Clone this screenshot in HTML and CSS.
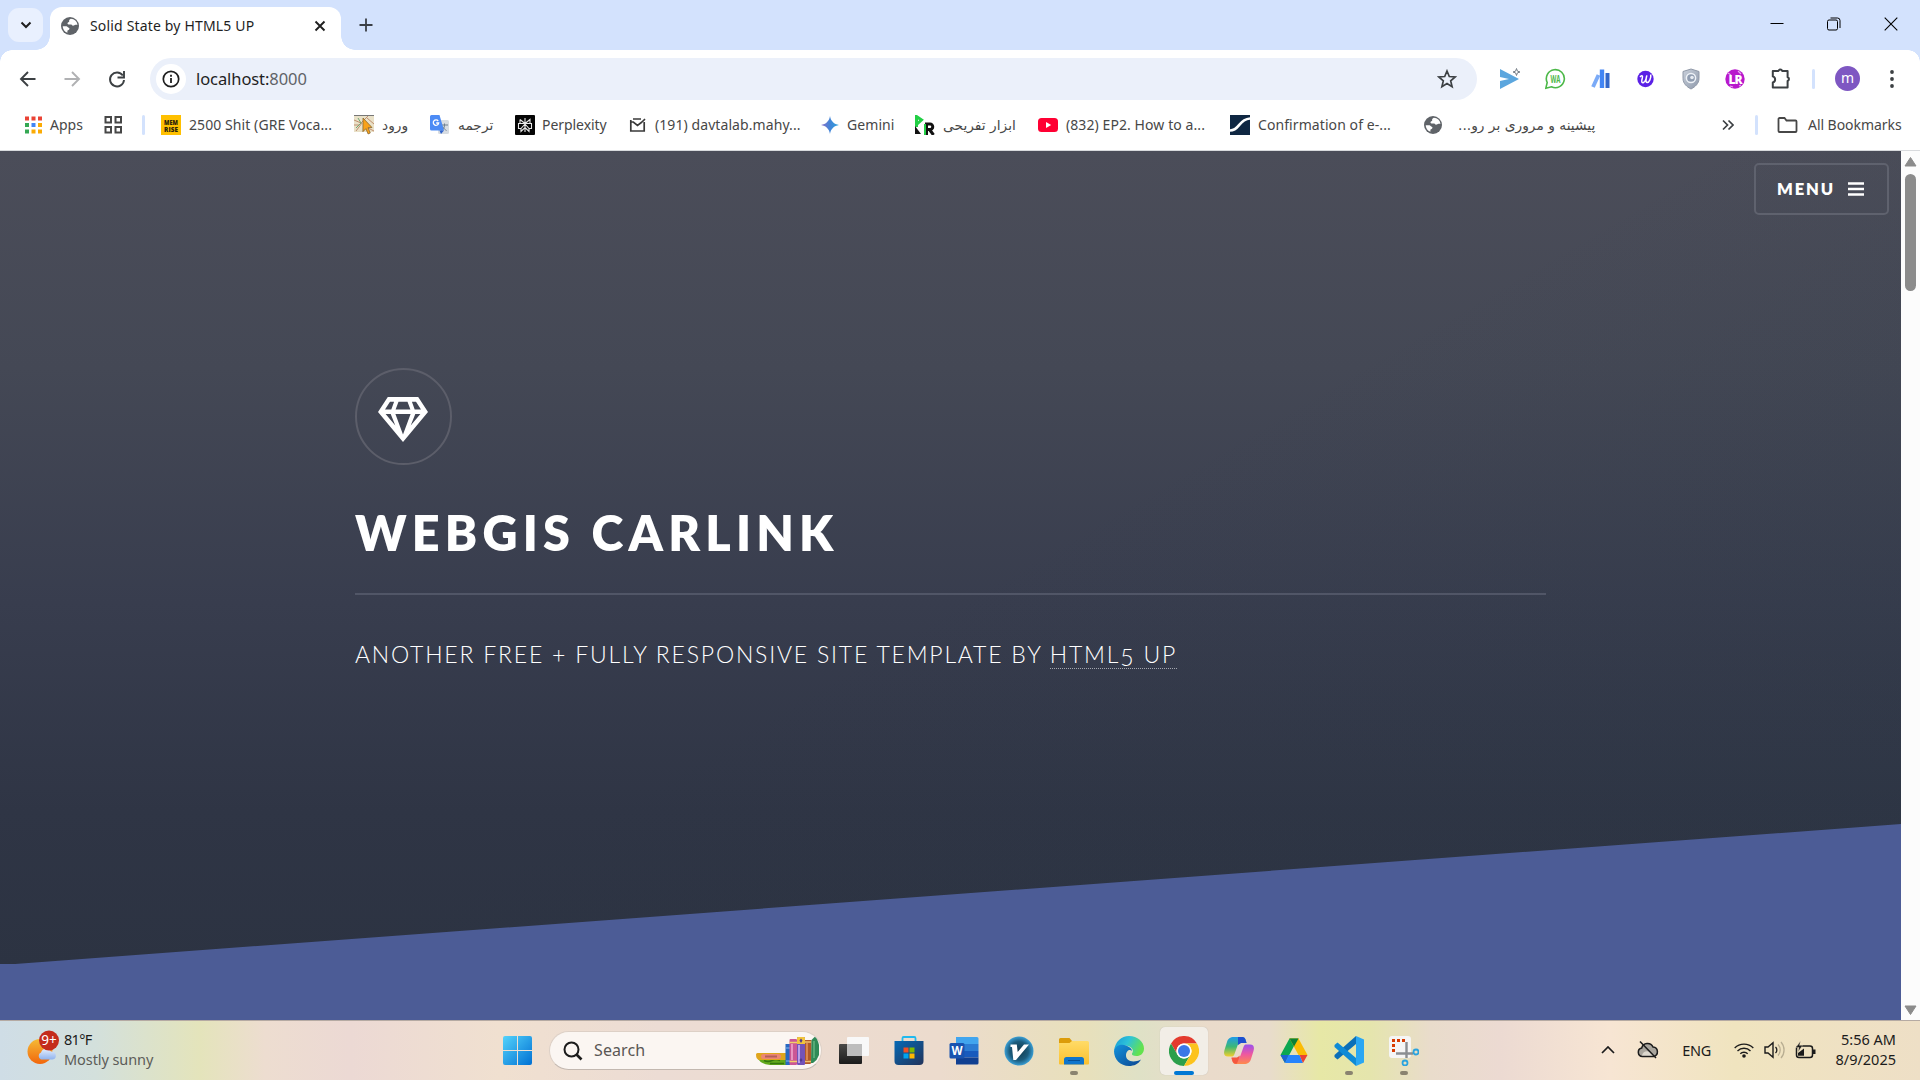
FILE: index.html
```html
<!DOCTYPE html>
<html lang="en">
<head>
<meta charset="utf-8">
<title>Solid State by HTML5 UP</title>
<link rel="stylesheet" href="styles.css">
</head>
<body>
<svg width="0" height="0" class="defs" aria-hidden="true">
  <defs>
    <linearGradient id="win" x1="0" y1="0" x2="1" y2="1"><stop offset="0" stop-color="#54d3fb"/><stop offset="1" stop-color="#0070d3"/></linearGradient>
    <linearGradient id="sun" x1="0" y1="0" x2="0" y2="1"><stop offset="0" stop-color="#f5bb36"/><stop offset="1" stop-color="#f2660c"/></linearGradient>
    <linearGradient id="cloud" x1="0" y1="0" x2="0" y2="1"><stop offset="0" stop-color="#e6effc"/><stop offset="1" stop-color="#8fb3ee"/></linearGradient>
    <linearGradient id="store" x1="0" y1="0" x2="1" y2="1"><stop offset="0" stop-color="#0669b5"/><stop offset="1" stop-color="#22335a"/></linearGradient>
    <linearGradient id="folder" x1="0" y1="0" x2="0" y2="1"><stop offset="0" stop-color="#ffdb67"/><stop offset="1" stop-color="#fbc02e"/></linearGradient>
    <linearGradient id="dark" x1="0" y1="0" x2="0" y2="1"><stop offset="0" stop-color="#4a4a48"/><stop offset="1" stop-color="#1b1b1b"/></linearGradient>
    <linearGradient id="edgeTop" x1="0" y1="0" x2="1" y2="0.4"><stop offset="0" stop-color="#1597d8"/><stop offset="0.5" stop-color="#2ec3d8"/><stop offset="1" stop-color="#63e24e"/></linearGradient>
    <linearGradient id="edgeLow" x1="0" y1="0" x2="1" y2="1"><stop offset="0" stop-color="#1393dd"/><stop offset="1" stop-color="#0c4590"/></linearGradient>
    <linearGradient id="cpA" x1="0" y1="0" x2="0" y2="1"><stop offset="0" stop-color="#1f9bea"/><stop offset="0.5" stop-color="#3cb875"/><stop offset="1" stop-color="#f3cf2c"/></linearGradient>
    <linearGradient id="cpB" x1="0" y1="0" x2="0" y2="1"><stop offset="0" stop-color="#9b50ee"/><stop offset="0.5" stop-color="#ee58a0"/><stop offset="1" stop-color="#ff8a4c"/></linearGradient>
    <linearGradient id="gem" x1="0" y1="0" x2="1" y2="0"><stop offset="0" stop-color="#8b6fc6"/><stop offset="0.5" stop-color="#4285d8"/><stop offset="1" stop-color="#2ea3dc"/></linearGradient>
    <radialGradient id="vball"><stop offset="0" stop-color="#12384a"/><stop offset="0.65" stop-color="#1b5c7d"/><stop offset="1" stop-color="#3a9ed4"/></radialGradient>
    <linearGradient id="shield" x1="0" y1="0" x2="1" y2="1"><stop offset="0" stop-color="#c9d0db"/><stop offset="1" stop-color="#8e99ab"/></linearGradient>
    <symbol id="globe" viewBox="0 0 18 18"><circle cx="9" cy="9" r="9" fill="#5f6368"/><path d="M9.800 1.800c-1 1-2 1-1.600 2.300.3.900-.7 1-1.500 1.700-.6.700 0 1.700.9 1.700h2.500c1 0 .8 1.200 1.900 1.200 1.200 0 1.600-.9 2.600-.9h1.900A7.300 7.300 0 0 0 9.800 1.800zM1.700 9.200l3.800.1c1 0 1.100 1.200 2.100 1.400 1 .2 1.100 1 .5 1.700-.6.700-1.700.6-1.700 1.700v1.700A7.300 7.300 0 0 1 1.700 9.200z" fill="#fff"/></symbol>
  </defs>
</svg>

<header class="tabstrip">
  <div class="tabsearch"><svg width="12" height="8" viewBox="0 0 12 8"><path d="M1.500 1.500 6 6l4.500-4.500" fill="none" stroke="#1f1f1f" stroke-width="2"/></svg></div>
  <div class="tab">
    <svg class="favicon" width="18" height="18"><use href="#globe"/></svg>
    <span class="tab-title">Solid State by HTML5 UP</span>
    <svg class="tab-close" width="12" height="12" viewBox="0 0 12 12"><path d="M1.500 1.500l9 9m0-9l-9 9" stroke="#1f1f1f" stroke-width="1.900"/></svg>
  </div>
  <svg class="newtab" width="14" height="14" viewBox="0 0 14 14"><path d="M7 .5v13M.5 7h13" stroke="#3b3f46" stroke-width="1.800"/></svg>
  <div class="winctl">
    <svg width="14" height="14" viewBox="0 0 14 14"><path d="M.5 6.500h13" stroke="#000"/></svg>
    <svg width="14" height="14" viewBox="0 0 14 14"><rect x=".5" y="3" width="10" height="10" rx="1.500" fill="none" stroke="#000"/><path d="M3.500 1h7a2.500 2.500 0 0 1 2.500 2.500V11" fill="none" stroke="#000"/></svg>
    <svg width="14" height="14" viewBox="0 0 14 14"><path d="M.7.700l12.600 12.600m0-12.600L.7 13.300" stroke="#000" stroke-width="1.100"/></svg>
  </div>
</header>

<nav class="toolbar">
  <svg width="20" height="20" viewBox="0 0 20 20"><path d="M17.500 10H3.500M10 3L3 10l7 7" fill="none" stroke="#3c4043" stroke-width="1.900"/></svg>
  <svg width="20" height="20" viewBox="0 0 20 20"><path d="M2.500 10h14M10 3l7 7-7 7" fill="none" stroke="#b0b1b3" stroke-width="1.900"/></svg>
  <svg width="20" height="20" viewBox="0 0 20 20"><path d="M15.800 6.500A7 7 0 1 0 17 11" fill="none" stroke="#3c4043" stroke-width="1.900"/><path d="M17 2v6.500h-6.500" fill="none" stroke="#3c4043" stroke-width="1.900"/></svg>
  <div class="omnibox">
    <span class="info"><svg width="18" height="18" viewBox="0 0 18 18"><circle cx="9" cy="9" r="7.700" fill="none" stroke="#1f1f1f" stroke-width="1.700"/><path d="M9 8v5M9 4.800v1.900" stroke="#1f1f1f" stroke-width="1.800"/></svg></span>
    <span class="url"><b>localhost:</b>8000</span>
    <svg class="star" width="20" height="20" viewBox="0 0 20 20"><path d="M10 2l2.300 5.500 5.900.5-4.500 3.900 1.400 5.800L10 14.600l-5.100 3.100 1.400-5.800L1.800 8l5.900-.5z" fill="none" stroke="#3c4043" stroke-width="1.700"/></svg>
  </div>
  <div class="extensions">
    <svg width="22" height="22" viewBox="0 0 22 22"><path d="M1 1l19 10L1 21v-8l9-2-9-2z" fill="#5ba6de"/><path d="M17.500.5l.9 2.600 2.600.9-2.600.9-.9 2.600-.9-2.600L14 4l2.600-.9z" fill="#fff" stroke="#777f88"/></svg>
    <svg width="22" height="22" viewBox="0 0 22 22"><path d="M2.200 14.500A9 9 0 1 1 6.500 18.800L.8 20.300z" fill="#fff" stroke="#4cb848" stroke-width="1.600"/><text x="10.500" y="14.500" text-anchor="middle" class="wa" textLength="10" lengthAdjust="spacingAndGlyphs">WA</text></svg>
    <svg width="22" height="22" viewBox="0 0 22 22"><path d="M2 19L7.500 7" stroke="#7aaaf7" stroke-width="3.800"/><path d="M11 1.500V20" stroke="#4285f4" stroke-width="4.400"/><path d="M16.500 5v15" stroke="#3367c9" stroke-width="4"/></svg>
    <svg width="20" height="20" viewBox="0 0 20 20"><circle cx="8.500" cy="10" r="8.200" fill="#5b21e6"/><path d="M3 8c2-2.500 3-1 2.200 1.500S4.500 14.500 6.500 13.500s3-5 3.300-7c-.8 3-1.500 7 .4 7s4.200-4.500 3.500-8" fill="none" stroke="#fff" stroke-width="1.500"/></svg>
    <svg width="20" height="22" viewBox="0 0 20 22"><path d="M9 1l8 2.500v7c0 5-4 8.500-8 10.500-4-2-8-5.500-8-10.500v-7z" fill="url(#shield)" stroke="#9099a8"/><circle cx="9" cy="10" r="4.600" fill="#8f9cb0" stroke="#eef2f7" stroke-width="1.500"/><circle cx="10" cy="9.500" r="1.800" fill="#e7ebf1"/></svg>
    <svg width="20" height="20" viewBox="0 0 20 20" overflow="visible"><g transform="translate(-1)"><circle cx="10" cy="10" r="9.700" fill="#b818cc"/><path d="M3 4l3 2M13 2l3 3M5 17l3 1M14 17l2-1" stroke="#e9a5f0" stroke-width="1.200"/><text x="10" y="15" text-anchor="middle" class="lr">LR</text></g></svg>
    <svg width="22" height="22" viewBox="0 0 22 22"><path d="M2.800 3h5.600a2 2 0 0 1 3.800 0h5.400v6.200a2 2 0 0 1 0 3.800v6.500H2.800v-5.100a3.100 3.100 0 0 0 0-6z" fill="none" stroke="#3c4043" stroke-width="2" stroke-linejoin="round"/></svg>
  </div>
  <i class="sep"></i>
  <span class="avatar">m</span>
  <svg width="6" height="20" viewBox="0 0 6 20"><g fill="#3c4043"><circle cx="3" cy="3" r="1.900"/><circle cx="3" cy="10" r="1.900"/><circle cx="3" cy="17" r="1.900"/></g></svg>
</nav>

<nav class="bookmarks">
  <a><svg width="17" height="18" viewBox="0 0 17 18"><path d="M0 2.500h17" stroke="#ea4335" stroke-width="4" stroke-dasharray="4 2.500"/><path d="M0 9h4" stroke="#34a853" stroke-width="4"/><path d="M6.500 9h4" stroke="#4285f4" stroke-width="4"/><path d="M13 9h4" stroke="#fbab05" stroke-width="4"/><path d="M0 15.500h4" stroke="#34a853" stroke-width="4"/><path d="M6.500 15.500h10.500" stroke="#fbab05" stroke-width="4" stroke-dasharray="4 2.500"/></svg><span>Apps</span></a>
  <a><svg width="19" height="18" viewBox="0 0 19 18"><g fill="none" stroke="#474747" stroke-width="2"><rect x="1.500" y="1" width="5.500" height="5.500"/><rect x="11.500" y="1" width="5.500" height="5.500"/><rect x="1.500" y="11" width="5.500" height="5.500"/><rect x="11.500" y="11" width="5.500" height="5.500"/></g></svg></a>
  <i class="sep"></i>
  <a><svg width="20" height="20" viewBox="0 0 20 20" overflow="visible"><rect width="20" height="20" fill="#ffc000"/><text x="10" y="9.500" text-anchor="middle" class="mem" textLength="14" lengthAdjust="spacingAndGlyphs">MEM</text><text x="10" y="16.500" text-anchor="middle" class="mem" textLength="14" lengthAdjust="spacingAndGlyphs">RISE</text></svg><span>2500 Shit (GRE Voca...</span></a>
  <a><svg width="20" height="20" viewBox="0 0 20 20"><rect width="20" height="17" fill="#e9e1c8"/><path d="M0 .5h20" stroke="#777"/><path d="M0 5l7 3L14 1M2 16l6-8M13 3l7 6M0 10h5M12 12l8 4" stroke="#c08f70" fill="none"/><path d="M4 3l3 5-5 5" stroke="#72a774" fill="none"/><path d="M9 3l9 9.500-4 .2 2.300 5.300-2.200 1-2.200-5.300-3 3z" fill="#f8a21b" stroke="#7b5c28" stroke-width=".7"/></svg><span dir="rtl" class="fa wide">ورود</span></a>
  <a><svg width="20" height="20" viewBox="0 0 20 20"><rect x="8" y="5" width="11" height="14" rx="1.500" fill="#d7dce2"/><path d="M11 10h7m-3.500-1.500V10c0 3-1.500 4.500-3 5.500m1-4c1 2 2.500 3 4 4" stroke="#70808f" fill="none"/><path d="M1.500 0h8L14 15.500H1.500A1.500 1.500 0 0 1 0 14V1.500A1.500 1.500 0 0 1 1.500 0z" fill="#4c8bf5"/><path d="M9.500 15.500H14L11 19z" fill="#2f62c9"/><path d="M8.200 6A2.700 2.700 0 1 0 8.700 8H6.200" fill="none" stroke="#fff" stroke-width="1.300"/></svg><span dir="rtl" class="fa wide">ترجمه</span></a>
  <a><svg width="20" height="20" viewBox="0 0 20 20"><rect width="20" height="20" rx="1" fill="#050505"/><path d="M10 3v14M5 4.500l5 4 5-4v4.500M5 4.500V9M3.500 8.500h13v5H14v3l-4-4-4 4v-3H3.500zM10 9l-4 4.500M10 9l4 4.500" fill="none" stroke="#e8e8e8" stroke-width="1.100"/></svg><span class="tight">Perplexity</span></a>
  <a><svg width="18" height="16" viewBox="0 0 18 16"><path d="M1.800 5v9h13.400V5M1.800 5l2.500 0L8.500 8.500 13 5M1.800 5V3M4 2h8M13 5l3-3" fill="none" stroke="#3a3a3a" stroke-width="1.700"/></svg><span>(191) davtalab.mahy...</span></a>
  <a><svg width="18" height="18" viewBox="0 0 18 18"><path d="M9 0c.7 5 4 8.300 9 9-5 .7-8.300 4-9 9-.7-5-4-8.300-9-9 5-.7 8.300-4 9-9z" fill="url(#gem)"/></svg><span>Gemini</span></a>
  <a><svg width="20" height="20" viewBox="0 0 20 20"><path d="M1.500 12V1.500l5 3.500-5 4.500" fill="none" stroke="#22cf45" stroke-width="3"/><path d="M0 11l6 8H0z" fill="#111"/><path d="M11.500 20V9h3.500a2.600 2.600 0 0 1 0 5.500h-3.500m3 0L18.500 20" fill="none" stroke="#111" stroke-width="3"/><path d="M10 9v11" stroke="#22cf45" stroke-width="2"/></svg><span dir="rtl" class="fa wide">ابزار تفریحی</span></a>
  <a><svg width="20" height="20" viewBox="0 0 20 20"><rect y="3" width="20" height="14" rx="3.500" fill="#ff0033"/><path d="M8 7l5.200 3L8 13z" fill="#fff"/></svg><span>(832) EP2. How to a...</span></a>
  <a><svg width="20" height="20" viewBox="0 0 20 20"><rect width="20" height="20" fill="#0f2742"/><path d="M0 15.500c10 0 8-11 20-12" fill="none" stroke="#fff" stroke-width="2.600"/></svg><span>Confirmation of e-...</span></a>
  <a><svg width="18" height="18"><use href="#globe"/></svg><span dir="rtl" class="fa wide">پیشینه و مروری بر رو...</span></a>
  <a><svg width="12" height="12" viewBox="0 0 12 12"><path d="M1 1.500L5.500 6 1 10.500M6.500 1.500L11 6l-4.500 4.500" fill="none" stroke="#3c4043" stroke-width="1.700"/></svg></a>
  <i class="sep"></i>
  <a><svg width="21" height="18" viewBox="0 0 21 18"><path d="M2.500 2h5l2 2.500h9a1 1 0 0 1 1 1V15a1 1 0 0 1-1 1h-16a1 1 0 0 1-1-1V3a1 1 0 0 1 1-1z" fill="none" stroke="#474747" stroke-width="1.800"/></svg><span>All Bookmarks</span></a>
</nav>

<div class="viewport">
  <main class="page">
    <a class="menu">Menu<svg width="16" height="14" viewBox="0 0 16 14"><path d="M0 1.500h16M0 7h16M0 12.500h16" stroke="#fff" stroke-width="2.600"/></svg></a>
    <section class="banner">
      <div class="logo"><svg width="50" height="45" viewBox="0 0 50 45"><path fill="#fff" fill-rule="evenodd" d="M9.800 0h30.400L50 15 25 45 0 15zM12 4.800L7 12.500h6.300l2.800-7.700zM20.500 4.800l-2.900 7.700h14.800l-2.900-7.700zM33.900 4.800l2.800 7.700H43l-5-7.700zM7.600 17l9.700 11.500L12.700 17zM17.400 17L25 37.500 32.600 17zM37.300 17l-4.600 11.500L42.400 17z"/></svg></div>
      <h1>WebGIS Carlink</h1>
      <p>Another free + fully responsive site template by <a>HTML<small>5</small> UP</a></p>
    </section>
  </main>
  <aside class="scrollbar">
    <svg width="13" height="10" viewBox="0 0 13 10"><path d="M6.500.5L12 9H1z" fill="#8b8b8b" stroke="#8b8b8b" stroke-linejoin="round"/></svg>
    <i class="thumb"></i>
    <svg width="13" height="10" viewBox="0 0 13 10"><path d="M6.500 9.500L12 1H1z" fill="#8b8b8b" stroke="#8b8b8b" stroke-linejoin="round"/></svg>
  </aside>
</div>

<footer class="taskbar">
  <div class="weather">
    <svg width="32" height="36" viewBox="0 0 32 36"><circle cx="13" cy="21.500" r="12.500" fill="url(#sun)"/><path d="M14 29.500a3.800 3.800 0 0 1 0-7 5.500 5.500 0 0 1 10-1 4 4 0 0 1 1.500 8z" fill="url(#cloud)"/><circle cx="22" cy="10.500" r="10" fill="#c42b1c"/><text x="22" y="15" text-anchor="middle" class="badge">9+</text></svg>
    <div class="wtext"><span>81°F</span><span class="muted">Mostly sunny</span></div>
  </div>
  <svg class="start" width="29" height="29" viewBox="0 0 29 29"><path d="M2 0h12v14H0V2a2 2 0 0 1 2-2zM15 0h12a2 2 0 0 1 2 2v12H15zM0 15h14v14H2a2 2 0 0 1-2-2zM15 15h14v12a2 2 0 0 1-2 2H15z" fill="url(#win)"/></svg>
  <div class="search">
    <svg width="20" height="20" viewBox="0 0 20 20"><circle cx="8.500" cy="8.500" r="7" fill="none" stroke="#1c1c1c" stroke-width="2"/><path d="M13.500 13.500l5 5" stroke="#1c1c1c" stroke-width="2.600"/></svg>
    <span>Search</span>
    <svg class="books" width="64" height="28" viewBox="0 0 64 28"><path d="M2 22h28v6H14Q5 27 2 22z" fill="#62a91c"/><path d="M8 23.500q4 2 8 0t8 0M14 26.500h14" stroke="#34750e" stroke-width="1.400" fill="none"/><path d="M0 17.500A1.500 1.500 0 0 1 1.500 16H30v7H3Q0 22 0 17.500z" fill="#e0a51c"/><rect x="5" y="17" width="20" height="5" rx="2.500" fill="#ec8672"/><rect x="9" y="18.500" width="12" height="2" fill="#b55f5b"/><path d="M29.500 7h4.500v21h-4.500z" fill="#2769c3"/><path d="M30 11h4m-4 13h4" stroke="#83b4ee"/><rect x="33.500" y="2" width="7.500" height="26" rx="1" fill="#cb5795"/><path d="M36 7v16" stroke="#e994c1" stroke-width="2"/><path d="M33.500 5.500h7.500m-7.500 19h7.500" stroke="#f0d06b" stroke-width="1.600"/><rect x="41" width="8" height="28" rx="1" fill="#7453b9"/><path d="M43 8v18" stroke="#b8a0e8" stroke-width="2"/><path d="M41 1a1 1 0 0 1 1-1h6a1 1 0 0 1 1 1v6h-8z" fill="#f1c43c"/><path d="M45 1.500l1.500 2L45 6l-1.500-2.500zM45 21l1.500 2L45 25l-1.500-2z" fill="#513b8e"/><path d="M49 3h6.500v23L54 27h-5z" fill="#b0582a"/><path d="M51 6v17" stroke="#d98551" stroke-width="2"/><path d="M49 5h6.500M49 24.500h6" stroke="#efbf6e" stroke-width="1.400"/><path d="M55.500 3l3-3c2 0 3.500 4 4.500 8v10l-2.500 5-3.500 3h-2z" fill="#2f8a57"/><path d="M58 4v17" stroke="#6dbb87" stroke-width="1.300"/></svg>
  </div>
  <div class="apps">
    <a><svg width="30" height="30" viewBox="0 0 30 30"><rect y="8" width="23" height="20" rx="1" fill="url(#dark)"/><rect x="8" y="1" width="22" height="19" rx="1" fill="#f8f8f8"/><rect x="8" y="8" width="15" height="12" fill="#bdbdbd"/></svg></a>
    <a><svg width="30" height="30" viewBox="0 0 30 30"><path d="M8.500 6V2.200A1.200 1.200 0 0 1 9.700 1h10.600a1.200 1.200 0 0 1 1.200 1.200V6" fill="none" stroke="#20b9ee" stroke-width="1.800"/><path d="M.5 5h29v20a4 4 0 0 1-4 4h-21a4 4 0 0 1-4-4z" fill="url(#store)"/><path d="M9.500 11.500h5v5h-5z" fill="#f25022"/><path d="M15.500 11.500h5v5h-5z" fill="#7fba00"/><path d="M9.500 17.500h5v5h-5z" fill="#00a4ef"/><path d="M15.500 17.500h5v5h-5z" fill="#ffb900"/></svg></a>
    <a><svg width="30" height="30" viewBox="0 0 30 30"><path d="M7 1h21a1.500 1.500 0 0 1 1.500 1.500V8H7z" fill="#41a5ee"/><path d="M7 8h22.500v7H7z" fill="#2b7cd3"/><path d="M7 15h22.500v6.500H7z" fill="#185abd"/><path d="M7 21.500h22.500v5.500A1.500 1.500 0 0 1 28 28.500H7z" fill="#103f91"/><rect x=".5" y="7" width="15" height="15.500" rx="1.500" fill="#1853b0"/><text x="8" y="19" text-anchor="middle" class="word">W</text></svg></a>
    <a><svg width="30" height="30" viewBox="0 0 30 30"><circle cx="15" cy="15" r="14.500" fill="url(#vball)"/><path d="M6.500 8.500h6.300l.9 7.500 6.300-7.500h5L12 24H9.300L8 11H6.500z" fill="#fff"/></svg></a>
    <a class="run"><svg width="30" height="30" viewBox="0 0 30 30"><path d="M0 3.500A1.500 1.500 0 0 1 1.500 2h9l2.500 3v4H0z" fill="#dc9c0a"/><path d="M0 7h10.500l2.500-2h15.500A1.500 1.500 0 0 1 30 6.500v21a1 1 0 0 1-1 1H1a1 1 0 0 1-1-1z" fill="url(#folder)"/><path d="M5 28.500v-5A2.500 2.500 0 0 1 7.500 21h15a2.500 2.500 0 0 1 2.500 2.500v5z" fill="#0f75cc"/><path d="M9 24.500h12" stroke="#064f97"/></svg></a>
    <a><svg width="30" height="30" viewBox="0 0 30 30"><path d="M0 15C1 5.500 7.500 0 15 0c8.500 0 15 6 15 12.500 0 5-3.500 7.500-7.500 7.500-3.500 0-5-1.300-4.500-2.500 1.200-1.500 1.300-3.500 0-5C15 8 4 8 0 15z" fill="url(#edgeTop)"/><path d="M0 15C2 8.500 8 8 12 9.500 16 11 18 13 18 15c-2-2.500-6-.5-6 4.500 0 5.500 7 8 15 4-2.500 4.500-7 6.500-12 6.500C6.500 30 0 23.500 0 15z" fill="url(#edgeLow)"/></svg></a>
    <a class="active"><svg width="30" height="30" viewBox="0 0 30 30"><circle cx="15" cy="15" r="15" fill="#fff"/><path d="M15 7.500h13A15 15 0 0 0 2 7.500l6.500 11.250A7.500 7.500 0 0 1 15 7.500z" fill="#e33b2e"/><path d="M2 7.500A15 15 0 0 0 15 30l6.500-11.250A7.500 7.500 0 0 1 8.500 18.750z" fill="#2c9f4b"/><path d="M28 7.500A15 15 0 0 1 15 30l6.500-11.250A7.500 7.500 0 0 0 15 7.500z" fill="#fcc31e"/><circle cx="15" cy="15" r="7.500" fill="#fff"/><circle cx="15" cy="15" r="6" fill="#3b78e7"/></svg></a>
    <a><svg width="30" height="30" viewBox="0 0 30 30"><path d="M10 1h8c3 0 3.500 2 4.500 6H17c-2 0-3 1-4 4l-2.500 7c-.7 2-1.500 2.500-3 2.500H4C0 20.500-.5 17.500.5 14L3 6c1-3.500 3-5 7-5z" fill="url(#cpA)"/><path d="M14 1h4c3 0 3.500 2 4.500 6H17l-3 2z" fill="#1d4fd0"/><path d="M20 28h-8c-3 0-3.500-2-4.500-6H13c2 0 3-1 4-4l2.500-7c.7-2 1.500-2.500 3-2.500H26c4 0 4.500 3 3.500 6.500L27 23c-1 3.500-3 5-7 5z" fill="url(#cpB)"/><path d="M7.500 21.500H13l3-2-3 8c-3 1-4.500-1-5.500-6z" fill="#f4573f"/></svg></a>
    <a><svg width="30" height="30" viewBox="0 0 30 30"><path d="M10.500 2.500h9L15 10 6 27l-4.500-8z" fill="#0ca750"/><path d="M10.500 2.500h9L28.500 19h-9z" fill="#fbbc04"/><path d="M10.500 2.500h9L15 10.500z" fill="#0b8138"/><path d="M1.500 19h8L6 27z" fill="#1d62d2"/><path d="M9.500 19h11L24 27H6z" fill="#2684fc"/><path d="M20.500 19h8L24 27z" fill="#e94235"/></svg></a>
    <a class="run"><svg width="30" height="30" viewBox="0 0 30 30"><path d="M22 0v8L3.500 23.500.5 21v-2z" fill="#0b6fb8"/><path d="M22 30v-8L3.500 6.500.5 9v2z" fill="#0f8bd6"/><path d="M22 0l8 3.500v23L22 30z" fill="#2aa7f3"/></svg></a>
    <a class="run"><svg width="30" height="30" viewBox="0 0 30 30"><rect width="22" height="22" rx="3" fill="#f5f5f5"/><path d="M4.500 16V4.500H16" fill="none" stroke="#d83b01" stroke-width="3" stroke-dasharray="3 2"/><path d="M17.500 6v16M7 17.500h17" stroke="#8b8e92" stroke-width="2.400"/><circle cx="27" cy="16" r="2.500" fill="none" stroke="#2aa3df" stroke-width="1.800"/><circle cx="16" cy="27" r="2.500" fill="none" stroke="#2aa3df" stroke-width="1.800"/></svg></a>
  </div>
  <div class="tray">
    <svg width="14" height="8" viewBox="0 0 14 8"><path d="M1 7l6-6 6 6" fill="none" stroke="#1b1b1b" stroke-width="1.700"/></svg>
    <svg width="22" height="18" viewBox="0 0 22 18"><path d="M5.500 15.500a4.300 4.300 0 0 1-.8-8.500A6 6 0 0 1 16 6a4.800 4.800 0 0 1 .5 9.500z" fill="#aaa69e" stroke="#1b1b1b" stroke-width="1.500"/><path d="M5 14.500c1-5 8-6 11 0z" fill="#ddd8ce"/><path d="M3 .5L19 17" stroke="#1b1b1b" stroke-width="1.500"/></svg>
    <span>ENG</span>
    <svg width="20" height="16" viewBox="0 0 20 16"><g fill="none" stroke="#1b1b1b" stroke-width="1.400"><path d="M.7 6a13 13 0 0 1 18.600 0"/><path d="M3.500 9a9.200 9.200 0 0 1 13 0"/><path d="M6.300 11.800a5.200 5.200 0 0 1 7.400 0"/></g><circle cx="10" cy="14" r="1.800" fill="#1b1b1b"/></svg>
    <svg width="21" height="18" viewBox="0 0 21 18"><path d="M1 6h3l5-4.300v14.600L4 12H1z" fill="none" stroke="#1b1b1b" stroke-width="1.400"/><path d="M11.500 6a4 4 0 0 1 0 6" fill="none" stroke="#1b1b1b" stroke-width="1.300"/><path d="M14 3.500a8 8 0 0 1 0 11M17 1a12 12 0 0 1 0 16" fill="none" stroke="#b9ae92" stroke-width="1.300"/></svg>
    <svg width="21" height="18" viewBox="0 0 21 18"><rect x="1.500" y="5" width="16" height="11.500" rx="2.500" fill="none" stroke="#1b1b1b" stroke-width="1.500"/><path d="M18 8.500h2.500v4.500H18z" fill="#1b1b1b"/><path d="M3 14.700V12l6-4.500v7.200z" fill="#1b1b1b"/><path d="M5.500 0L1 6.500h3L3 11l4.500-6.500h-3z" fill="#1b1b1b" stroke="#efe3c6" stroke-width=".4"/></svg>
    <div class="clock"><span>5:56 AM</span><span>8/9/2025</span></div>
  </div>
</footer>
</body>
</html>
```
FILE: styles.css
```css
* { box-sizing: border-box; }
html, body { margin: 0; height: 100%; overflow: hidden; }
body {
  display: grid;
  grid-template-columns: 1920px;
  grid-template-rows: 50px 57px 44px 869px 60px;
  width: 1920px;
  height: 1080px;
  font: 14px/20px "Noto Sans", "Open Sans", sans-serif;
  letter-spacing: 0;
  color: #474747;
  background: #fff;
}
svg { display: block; flex: none; }
.defs { position: absolute; }
.sep { width: 3px; height: 20px; border-radius: 2px; background: #d3e2fd; }

/* tab strip */
.tabstrip { display: flex; align-items: flex-start; background: #d3e2fd; padding-left: 8px; }
.tabsearch { display: grid; place-items: center; width: 35px; height: 34px; margin: 8px 7px 0 0; border-radius: 11px; background: #e9f0fe; }
.tab { display: flex; align-items: center; width: 291px; height: 43px; margin-top: 7px; padding: 0 15px 5px 11px; border-radius: 12px 12px 0 0; background: #fff; position: relative; }
.tab::before, .tab::after { content: ""; position: absolute; bottom: 0; width: 14px; height: 14px; }
.tab::before { right: 100%; background: radial-gradient(circle at 0 0, transparent 13.500px, #fff 14px); }
.tab::after { left: 100%; background: radial-gradient(circle at 100% 0, transparent 13.500px, #fff 14px); }
.tab-title { flex: 1; margin-left: 11px; color: #1f1f1f; letter-spacing: 0.170px; }
.newtab { margin: 18px 0 0 18px; }
.winctl { display: flex; gap: 43px; margin: 17px 22px 0 auto; }

/* toolbar */
.toolbar {
  display: flex;
  align-items: center;
  padding: 0 25px 0 18px;
  background:
    radial-gradient(circle at 12px 12px, #fff 11.500px, #d3e2fd 12px) 0 0 / 12px 12px no-repeat,
    radial-gradient(circle at 0 12px, #fff 11.500px, #d3e2fd 12px) 100% 0 / 12px 12px no-repeat,
    #fff;
}
.toolbar > svg:nth-of-type(2) { margin-left: 24px; }
.toolbar > svg:nth-of-type(3) { margin: 0 23px 0 25px; }
.omnibox { display: flex; align-items: center; flex: none; width: 1327px; height: 42px; padding: 0 20px 0 6px; border-radius: 21px; background: #ebf0fa; }
.info { display: grid; place-items: center; width: 30px; height: 30px; border-radius: 50%; background: #fff; }
.url { flex: 1; margin-left: 10px; font-size: 16.500px; letter-spacing: -0.080px; color: #5f6368; }
.url b { font-weight: 400; color: #1f1f1f; }
.extensions { display: flex; align-items: center; justify-content: space-between; flex: none; width: 293px; margin: 0 20px 0 22px; }
.avatar { flex: none; width: 25px; height: 25px; margin: 0 29px 0 20px; border-radius: 50%; background: #7e57c2; color: #fff; font-size: 14px; line-height: 23px; text-align: center; }
.toolbar > svg:last-child { margin: 0; }
.toolbar .sep { flex: none; }
.wa { font: 700 10px "Open Sans", sans-serif; fill: #4cb848; }
.lr { font: 800 12px "Open Sans", sans-serif; fill: #fff; letter-spacing: -1px; }
.mem { font: 800 7.500px "Open Sans", sans-serif; fill: #2b2309; }

/* bookmarks */
.bookmarks {
  display: grid;
  grid-template-columns: 79px 38px 19px 193px 76px 85px 114px 192px 94px 123px 192px 194px 298px 33px 22px 130px;
  align-items: center;
  padding: 0 0 8px 25px;
  border-bottom: 1px solid #d8dadd;
}
.bookmarks a { display: flex; align-items: center; gap: 8px; white-space: nowrap; letter-spacing: 0.080px; }
.bookmarks a:first-child { letter-spacing: 0; }
.bookmarks a:nth-of-type(12) { gap: 16px; }
.bookmarks a:last-child { gap: 10px; letter-spacing: -0.050px; }
.bookmarks .tight { margin-left: -1px; letter-spacing: -0.050px; }
.bookmarks .fa { font-family: "DejaVu Sans", sans-serif; font-size: 13.500px; letter-spacing: 0; }
.bookmarks .wide { font-size: 13.800px; }

/* page */
.viewport { display: grid; grid-template-columns: 1901px 19px; }
.page {
  position: relative;
  display: flex;
  flex-direction: column;
  color: #fff;
  font-family: Lato, "Open Sans", sans-serif;
  text-transform: uppercase;
  background: linear-gradient(150deg, transparent 50%, rgba(40, 54, 66, 0.3) 100%), linear-gradient(#4b4d59, #444855 25%, #383d4e 52%, #2f3545 76%, #2c3342 94%);
}
.page::after { content: ""; position: absolute; inset: 673px 0 0; background: #4c5c96; clip-path: polygon(0 140px, 15px 140px, 100% 0, 100% 100%, 0 100%); }
.menu { display: flex; align-items: center; align-self: flex-end; gap: 13px; width: 135px; height: 52px; margin: 12px 12px 0 0; padding-left: 21px; border: 2px solid #5f626e; border-radius: 5px; font-size: 16.500px; font-weight: 800; letter-spacing: 1.900px; }
.banner { width: 1191px; margin: 153px 0 0 355px; }
.logo { display: grid; place-items: center; width: 97px; height: 97px; padding: 5px 1px 0 0; border: 2px solid #5c5e6a; border-radius: 50%; }
h1 { margin: 33px 0 0; height: 97px; border-bottom: 2px solid #515667; font-size: 48.500px; line-height: 68px; font-weight: 800; letter-spacing: 5.200px; white-space: nowrap; }
.banner p { margin: 43px 0 0; font-size: 23px; line-height: 32px; font-weight: 300; letter-spacing: 1.790px; white-space: nowrap; }
.banner p a { border-bottom: 1px dotted #a3a6af; }
.banner small { font-size: 23px; position: relative; top: 3px; }

.scrollbar { display: flex; flex-direction: column; align-items: center; padding: 6px 0 5px; background: #fcfcfc; }
.thumb { width: 11px; height: 117px; margin: 7px 0 auto; border-radius: 6px; background: #8b8b8b; }

/* taskbar */
.taskbar {
  display: flex;
  align-items: center;
  border-top: 1px solid #b5aaa3;
  color: #1b1b1b;
  background: linear-gradient(90deg, #cfdde6 0, #d3e0dc 95px, #e4e4bb 200px, #edddd0 265px, #ecd9d4 350px, #f0e0d0 500px, #ecdcd4 660px, #ecdbcd 940px, #e8e0bb 1085px, #dfe1c6 1140px, #eadbcb 1210px, #e8dccb 1270px, #e7e8a6 1320px, #e5e5ad 1370px, #e9dccb 1430px, #ecdad2 1500px, #f7e5d3 1610px, #f0e4bf 1735px, #eedfc6 1920px);
}
.weather { display: flex; align-items: center; gap: 5px; width: 503px; padding-left: 27px; }
.weather svg { margin-top: -6px; }
.wtext { display: flex; flex-direction: column; margin-top: -4px; font-size: 14.500px; letter-spacing: -0.7px; }
.muted { color: #5c5c58; letter-spacing: -0.080px; }
.badge { font: 13.500px "Noto Sans", sans-serif; fill: #fff; }
.search { display: flex; align-items: center; width: 273px; height: 39px; margin-left: 17px; padding: 0 1px 0 13px; border: 1px solid #ddd0c6; border-bottom-color: #c3b8b0; border-radius: 20px; background: #fbf6f2; font-size: 16px; letter-spacing: 0.1px; color: #5a5754; }
.search span { flex: 1; margin: -1px 0 0 11px; }
.apps { display: grid; grid-template-columns: repeat(11, 55px); margin-left: 4.500px; }
.apps a { display: grid; place-items: center; width: 48px; height: 48px; margin: 0 3.500px; border-radius: 5px; position: relative; }
.apps .active { background: #f2eee7; box-shadow: 0 0 1px #b9b2a8; }
.apps .run::after, .apps .active::after { content: ""; position: absolute; bottom: 0; left: 20px; width: 8px; height: 4px; border-radius: 2px; background: #8a8370; }
.apps .active::after { left: 14px; width: 20px; background: #0078d4; }
.word { font: 700 11.500px "Open Sans", sans-serif; fill: #fff; }
.tray { display: flex; align-items: center; margin: -2px 0 0 auto; padding-right: 24px; font-size: 14.500px; letter-spacing: -0.3px; }
.tray > span { margin: 0 23px; }
.tray svg:nth-of-type(1) { margin-right: 22px; }
.tray svg:nth-of-type(3), .tray svg:nth-of-type(4) { margin-right: 10px; }
.clock { display: flex; flex-direction: column; align-items: flex-end; width: 80px; margin-top: -1px; letter-spacing: 0; }
```
